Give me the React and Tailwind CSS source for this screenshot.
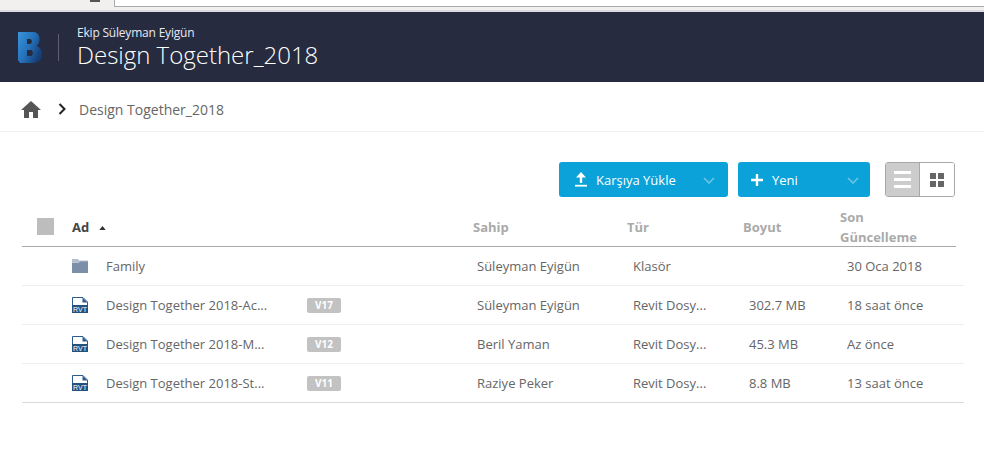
import React from "react";

function RvtIcon() {
  return (
    <svg width="16" height="16" viewBox="0 0 16 16" className="shrink-0">
      <path d="M0.5 0.5H11L15.5 5V15.5H0.5Z" fill="#fff" stroke="#2c5b8f" strokeWidth="1" />
      <path d="M10.5 0.5V5.5H15.5Z" fill="#2c5b8f" />
      <rect x="0" y="8" width="16" height="8" fill="#23527f" />
      <text x="8" y="15" textAnchor="middle" fontSize="7" fontFamily="Liberation Sans, sans-serif" fill="#fff">RVT</text>
    </svg>
  );
}

function FolderIcon() {
  return (
    <svg width="16" height="14" viewBox="0 0 16 14" className="shrink-0">
      <path d="M0 0H6L7 1.5H16V3H0Z" fill="#b4bfcd" />
      <path d="M0 3.5H7L8 2.5H16V14H0Z" fill="#7c8fa8" />
    </svg>
  );
}

function Chevron() {
  return (
    <svg width="12" height="7" viewBox="0 0 12 7" fill="none" stroke="#6fc4e6" strokeWidth="1.6">
      <path d="M1 1L6 6L11 1" />
    </svg>
  );
}

const rows = [
  { name: "Family", owner: "Süleyman Eyigün", type: "Klasör", size: "", date: "30 Oca 2018", folder: true },
  { name: "Design Together 2018-Ac...", v: "V17", owner: "Süleyman Eyigün", type: "Revit Dosy...", size: "302.7 MB", date: "18 saat önce" },
  { name: "Design Together 2018-M...", v: "V12", owner: "Beril Yaman", type: "Revit Dosy...", size: "45.3 MB", date: "Az önce" },
  { name: "Design Together 2018-St...", v: "V11", owner: "Raziye Peker", type: "Revit Dosy...", size: "8.8 MB", date: "13 saat önce" },
];

export default function App() {
  return (
    <div className="w-[984px] h-[472px] bg-white overflow-hidden font-['Open_Sans',sans-serif]">
      <div className="h-3 bg-[#f1f0ef] flex items-start border-b-2 border-[#dcdce0]">
        <div className="w-[10px] h-[2px] bg-[#555] ml-[90px]" />
        <div className="ml-[14px] flex-1 h-[7px] bg-white border-l border-b border-[#a9a9a9]" />
      </div>

      <header className="h-[70px] bg-[#262b40] flex items-center">
        <svg width="24" height="31" viewBox="0 0 24 31" className="ml-[18px] shrink-0">
          <defs>
            <linearGradient id="bg" x1="0" y1="0" x2="1" y2="0.6">
              <stop offset="0" stopColor="#3a94dc" />
              <stop offset="0.55" stopColor="#2470b8" />
              <stop offset="1" stopColor="#153f78" />
            </linearGradient>
          </defs>
          <path fillRule="evenodd" d="M0 0H15C19.500 0 21.500 3 21.500 7C21.500 10 20.500 12.500 18.500 14C22 15 24 18 24 22C24 27.500 20 31 15 31H2L0 28ZM9 7V12H12C14.500 12 14.500 7 12 7ZM9 18V24H13C15.500 24 15.500 18 13 18Z" fill="url(#bg)" />
        </svg>
        <div className="w-px h-[27px] bg-[#5c6072] ml-[16px]" />
        <div className="ml-[18px] mt-[-1px] flex flex-col">
          <div className="text-[12px] leading-[16px] text-[#e8eaf0] tracking-[-0.2px]">Ekip Süleyman Eyigün</div>
          <div className="text-[24px] leading-[28px] text-white font-light">Design Together_2018</div>
        </div>
      </header>

      <nav className="h-[50px] border-b border-[#efefef] flex items-center">
        <svg width="20" height="17" viewBox="0 0 20 17" className="ml-[21px] mt-[5px] shrink-0">
          <path d="M10 0L20 9H17V17H12V11H8V17H3V9H0Z" fill="#555" />
        </svg>
        <svg width="8" height="12" viewBox="0 0 8 12" fill="none" stroke="#222" strokeWidth="2" className="ml-[17px] mt-[5px] shrink-0">
          <path d="M1.500 1L6.500 6L1.500 11" />
        </svg>
        <div className="ml-[13px] mt-[5px] text-[14px] text-[#666]">Design Together_2018</div>
      </nav>

      <div className="mt-[30px] flex justify-end pr-[29px] h-[35px]">
        <button className="w-[169px] h-[35px] rounded-[3px] bg-[#0aa2d9] text-white flex items-center text-[13px] font-normal">
          <svg width="14" height="15" viewBox="0 0 14 15" className="ml-[15px] shrink-0" fill="#fff">
            <path d="M7 0L12 5.500H8.200V11H5.800V5.500H2Z" />
            <rect x="1" y="12.800" width="12" height="1.800" />
          </svg>
          <span className="ml-[8px] mt-[2px]">Karşıya Yükle</span>
          <span className="ml-auto mr-[13px] mt-[1px] flex"><Chevron /></span>
        </button>
        <button className="ml-[10px] w-[132px] h-[35px] rounded-[3px] bg-[#0aa2d9] text-white flex items-center text-[13px] font-normal">
          <svg width="12" height="12" viewBox="0 0 12 12" className="ml-[13px] mt-[1px] shrink-0" fill="#fff">
            <path d="M4.800 0H7.200V4.800H12V7.200H7.200V12H4.800V7.200H0V4.800H4.800Z" />
          </svg>
          <span className="ml-[9px] mt-[2px]">Yeni</span>
          <span className="ml-auto mr-[11px] mt-[1px] flex"><Chevron /></span>
        </button>
        <div className="ml-[15px] w-[70px] h-[35px] rounded-[3px] border border-[#a8a8a8] flex overflow-hidden">
          <div className="w-[33px] bg-[#cccccc] flex flex-col items-center justify-center gap-[4px]">
            <div className="w-[17px] h-[3px] bg-white" />
            <div className="w-[17px] h-[3px] bg-white" />
            <div className="w-[17px] h-[3px] bg-white" />
          </div>
          <div className="flex-1 bg-white border-l border-[#a8a8a8] flex items-center justify-center">
            <div className="grid grid-cols-2 gap-[2px]">
              <div className="w-[6px] h-[6px] bg-[#666]" />
              <div className="w-[6px] h-[6px] bg-[#666]" />
              <div className="w-[6px] h-[6px] bg-[#666]" />
              <div className="w-[6px] h-[6px] bg-[#666]" />
            </div>
          </div>
        </div>
      </div>

      <div className="mt-[10px] ml-[22px] w-[934px] h-[40px] border-b border-[#a9a9a9] flex items-center text-[13px] font-bold text-[#aaaaaa]">
        <div className="ml-[15px] w-[17px] h-[17px] mt-[-1px] bg-[#bdbdbd] shrink-0" />
        <div className="ml-[18px] w-[401px] flex items-center text-[#444] mt-[2px]">
          Ad
          <svg width="7" height="4" viewBox="0 0 8 5" className="ml-[10px]"><path d="M4 0L8 5H0Z" fill="#333" /></svg>
        </div>
        <div className="w-[154px] mt-[2px]">Sahip</div>
        <div className="w-[116px] mt-[2px]">Tür</div>
        <div className="w-[97px] mt-[2px]">Boyut</div>
        <div className="leading-[20px] mt-[1px]">Son<br />Güncelleme</div>
      </div>

      <div className="ml-[22px] w-[942px]">
        {rows.map((r) => (
          <div key={r.name} className="h-[39px] border-b border-[#eeeeee] last:border-[#d9d9d9] flex items-center text-[13px] text-[#666]">
            <div className="ml-[50px] w-[34px] shrink-0 flex">{r.folder ? <FolderIcon /> : <RvtIcon />}</div>
            <div className="w-[201px] shrink-0 whitespace-nowrap mt-[1px]">{r.name}</div>
            <div className="w-[170px] shrink-0">
              {r.v && (
                <span className="flex items-center justify-center w-[34px] h-[15px] rounded-[2px] bg-[#c2c2c2] text-white text-[10px] font-bold">{r.v}</span>
              )}
            </div>
            <div className="w-[155px] shrink-0 mt-[1px]">{r.owner}</div>
            <div className="w-[117px] shrink-0 mt-[1px] pl-[1px]">{r.type}</div>
            <div className="w-[98px] shrink-0 mt-[1px]">{r.size}</div>
            <div className="whitespace-nowrap mt-[1px]">{r.date}</div>
          </div>
        ))}
      </div>
    </div>
  );
}
